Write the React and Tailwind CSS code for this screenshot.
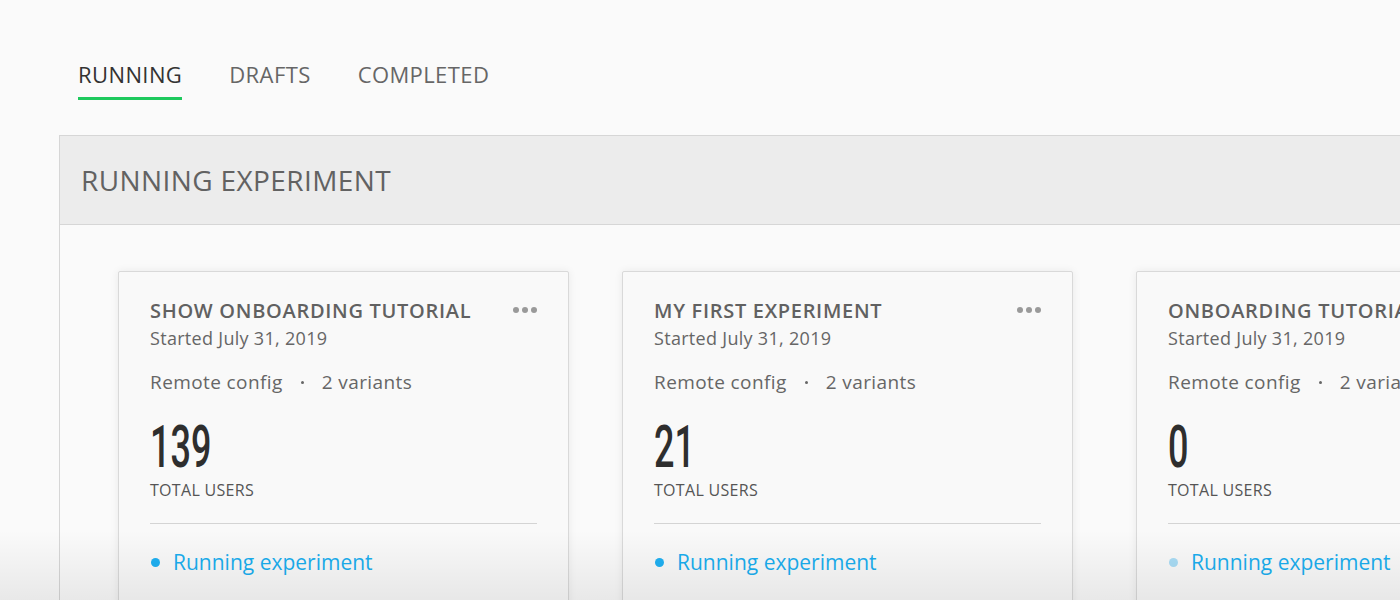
import React from 'react';

const experiments = [
  { title: 'SHOW ONBOARDING TUTORIAL', started: 'Started July 31, 2019', users: '139', dot: 'bg-[#1fb0f2]', ml: 'ml-0', menu: true },
  { title: 'MY FIRST EXPERIMENT', started: 'Started July 31, 2019', users: '21', dot: 'bg-[#1fb0f2]', ml: 'ml-[53px]', menu: true },
  { title: 'ONBOARDING TUTORIAL', started: 'Started July 31, 2019', users: '0', dot: 'bg-[#a9dcf5]', ml: 'ml-[63px]', menu: false },
];

const Dots = () => (
  <div className="flex gap-[3px] pt-[8px]">
    <span className="w-[6px] h-[6px] rounded-full bg-[#9a9a9a]" />
    <span className="w-[6px] h-[6px] rounded-full bg-[#9a9a9a]" />
    <span className="w-[6px] h-[6px] rounded-full bg-[#9a9a9a]" />
  </div>
);

const ExperimentCard = ({ data }) => (
  <div className={`${data.ml} shrink-0 w-[451px] h-[360px] bg-[#f9f9f9] border border-[#d9d9d9] rounded-[2px] shadow-[0_0_8px_rgba(0,0,0,0.07)] px-[31px] pt-[27px]`}>
    {/* header */}
    <div className="flex justify-between items-start">
      <h3 className="text-[20px] leading-6 font-semibold tracking-[0.7px] text-[#616161] whitespace-nowrap">{data.title}</h3>
      {data.menu && <Dots />}
    </div>
    <p className="text-[18px] leading-[30px] tracking-[0.3px] text-[#666]">{data.started}</p>

    <div className="mt-[17px] flex items-center text-[19px] leading-6 tracking-[0.4px] text-[#666] whitespace-nowrap">
      <span>Remote config</span>
      <span className="mx-[18px] w-[3px] h-[3px] rounded-full bg-[#666]" />
      <span>2 variants</span>
    </div>

    {/* users */}
    <div className="mt-[23px] h-[60px] overflow-visible">
      <span className="inline-block origin-left scale-x-[0.6] text-[60px] leading-[60px] font-medium text-[#2e2e2e] font-['Roboto',sans-serif]">
        {data.users}
      </span>
    </div>
    <p className="mt-[3px] text-[16px] leading-5 tracking-[0.3px] text-[#555]">TOTAL USERS</p>

    <div className="mt-[23px] h-px bg-[#d4d4d4]" />

    <div className="mt-[26px] flex items-center gap-[13px] text-[21px] leading-6 text-[#1aaeef] whitespace-nowrap">
      <span className={`w-[9px] h-[9px] rounded-full ${data.dot} ml-[1px]`} />
      <span>Running experiment</span>
    </div>
  </div>
);

export default function App() {
  return (
    <div className="relative w-[1400px] h-[600px] overflow-hidden bg-[#fafafa] font-['Open_Sans',sans-serif]">
      {/* tabs */}
      <nav className="flex gap-[47px] pl-[78px] pt-[59px]">
        <div className="flex flex-col">
          <span className="text-[22px] leading-[30px] tracking-[0.4px] text-[#333]">RUNNING</span>
          <span className="mt-[8px] h-[3px] bg-[#1ec95d]" />
        </div>
        <span className="text-[22px] leading-[30px] tracking-[0.4px] text-[#666]">DRAFTS</span>
        <span className="text-[22px] leading-[30px] tracking-[0.4px] text-[#666]">COMPLETED</span>
      </nav>

      {/* panel */}
      <section className="ml-[59px] mt-[35px] w-[1400px] border border-[#d6d6d6]">
        <header className="h-[89px] bg-[#ececec] border-b border-[#d6d6d6] flex items-center pl-[21px]">
          <h2 className="text-[28px] tracking-[0.4px] text-[#626262]">RUNNING EXPERIMENT</h2>
        </header>
        <div className="flex pl-[58px] pt-[46px]">
          {experiments.map((e) => (
            <ExperimentCard key={e.title} data={e} />
          ))}
        </div>
      </section>

      {/* bottom fade */}
      <div className="absolute left-0 right-0 bottom-0 h-[70px] pointer-events-none bg-gradient-to-b from-transparent to-[rgba(0,0,0,0.07)]" />
    </div>
  );
}
